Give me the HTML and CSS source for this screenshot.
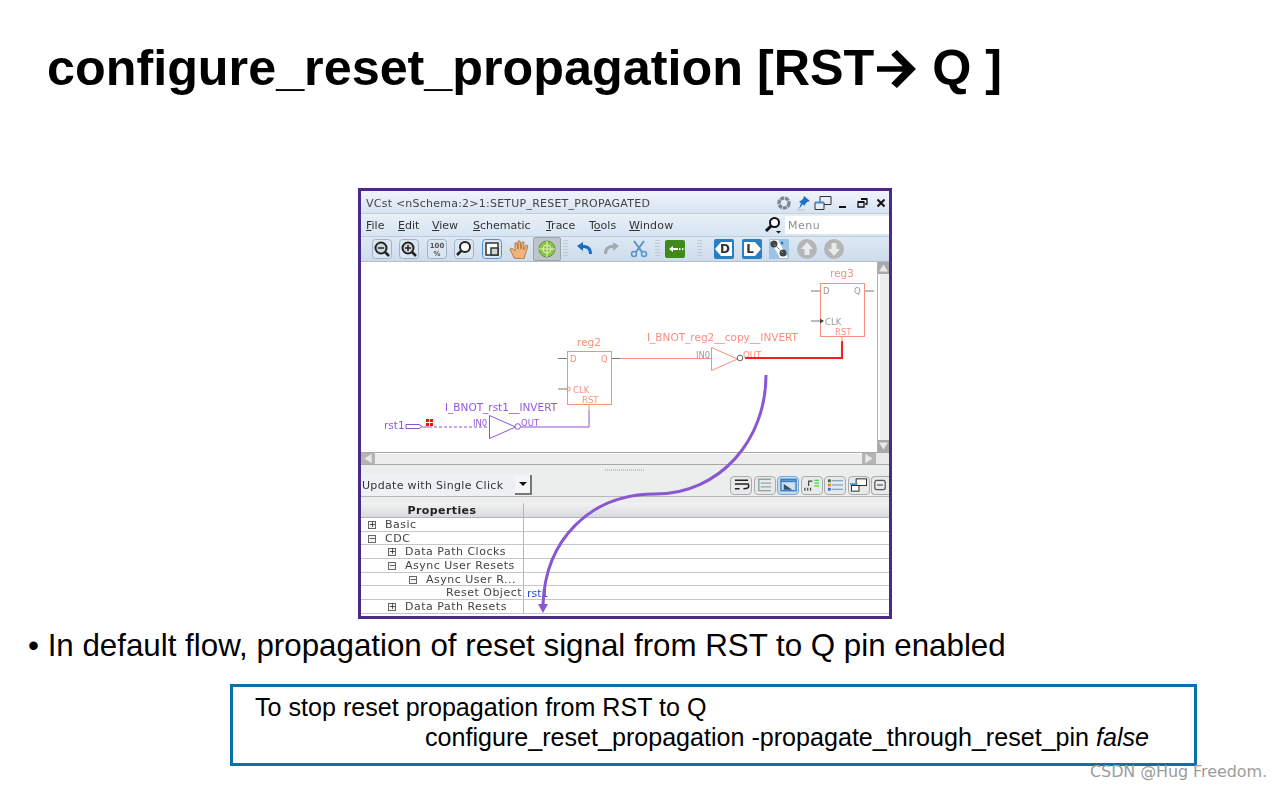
FILE: index.html
```html
<!DOCTYPE html>
<html lang="en">
<head>
<meta charset="utf-8">
<title>configure_reset_propagation</title>
<link rel="stylesheet" href="styles.css">
</head>
<body>
<main class="slide">
  <h1 class="title">configure_reset_propagation [RST<svg class="title-arrow" viewBox="0 0 44 40"><path d="M2 17h27L17 5l6-5 20 20-20 20-6-5 12-12H2z"/></svg> Q ]</h1>

  <section class="window">
    <div class="titlebar">
      <span class="titlebar-text">VCst &lt;nSchema:2&gt;1:SETUP_RESET_PROPAGATED</span>
      <div class="titlebar-icons">
        <svg class="ti" viewBox="0 0 16 16"><circle cx="8" cy="8" r="5" fill="none" stroke="#7f8794" stroke-width="3.4" stroke-dasharray="4 .8"/></svg>
        <svg class="ti" viewBox="0 0 16 16"><path d="M9 1l6 5-3 1-3 4-1-2-4 5 2-6-2-1 4-3z" fill="#1f6fc4"/><path d="M2 15h8" stroke="#b9c2cc"/></svg>
        <svg class="ti ti-wide" viewBox="0 0 18 16"><path d="M6 1.500h11v8H6z" fill="#e5edf6" stroke="#333"/><path d="M1 7.500h9v7H1z" fill="#e5edf6" stroke="#333"/><path d="M1 7.500h9" stroke="#3c8fd6" stroke-width="2"/></svg>
        <svg class="ti" viewBox="0 0 16 16"><path d="M4 12h7" stroke="#111" stroke-width="2"/></svg>
        <svg class="ti" viewBox="0 0 16 16"><path d="M7 4h6v5h-2M4 7h6v5H4z" fill="none" stroke="#111" stroke-width="1.300"/><path d="M7 4h6M4 7h6" stroke="#111" stroke-width="2.200"/></svg>
        <svg class="ti" viewBox="0 0 16 16"><path d="M4.500 4.500l7 7M11.500 4.500l-7 7" stroke="#111" stroke-width="2"/></svg>
      </div>
    </div>

    <nav class="menubar">
      <span class="menu menu-file"><u>F</u>ile</span>
      <span class="menu menu-edit"><u>E</u>dit</span>
      <span class="menu menu-view"><u>V</u>iew</span>
      <span class="menu menu-schem"><u>S</u>chematic</span>
      <span class="menu menu-trace"><u>T</u>race</span>
      <span class="menu menu-tools">T<u>o</u>ols</span>
      <span class="menu menu-window"><u>W</u>indow</span>
      <svg class="search-icon" viewBox="0 0 18 18"><circle cx="10.500" cy="6.500" r="4.500" fill="#fff" stroke="#111" stroke-width="2"/><path d="M7 10l-5 5" stroke="#111" stroke-width="3"/><path d="M12 15h5l-2.500 2.500z" fill="#111"/></svg>
      <span class="search-box">Menu</span>
    </nav>

    <div class="toolbar">
      <span class="tool"><svg viewBox="0 0 20 20"><rect x=".5" y=".5" width="19" height="19" rx="3" fill="#dbe6f2" stroke="#9fb2c7"/><circle cx="9" cy="9" r="5.500" fill="#cfd6dc" stroke="#222" stroke-width="2"/><path d="M6 9h6" stroke="#222" stroke-width="1.500"/><path d="M13 13l4 4" stroke="#222" stroke-width="2.500"/></svg></span>
      <span class="tool"><svg viewBox="0 0 20 20"><rect x=".5" y=".5" width="19" height="19" rx="3" fill="#dbe6f2" stroke="#9fb2c7"/><circle cx="9" cy="9" r="5.500" fill="#cfd6dc" stroke="#222" stroke-width="2"/><path d="M6 9h6M9 6v6" stroke="#222" stroke-width="1.500"/><path d="M13 13l4 4" stroke="#222" stroke-width="2.500"/></svg></span>
      <span class="tool"><svg viewBox="0 0 20 20"><rect x=".5" y=".5" width="19" height="19" rx="3" fill="#dbe6f2" stroke="#9fb2c7"/><text x="10" y="9" class="tool-text">100</text><text x="10" y="17" class="tool-text">%</text></svg></span>
      <span class="tool"><svg viewBox="0 0 20 20"><rect x=".5" y=".5" width="19" height="19" rx="3" fill="#dbe6f2" stroke="#9fb2c7"/><circle cx="11" cy="8" r="5" fill="#fff" stroke="#222" stroke-width="2"/><path d="M7 12l-4 4" stroke="#222" stroke-width="2.500"/></svg></span>
      <span class="tool"><svg viewBox="0 0 20 20"><rect x=".5" y=".5" width="19" height="19" rx="3" fill="#dbe6f2" stroke="#4d93d2"/><rect x="4" y="4" width="12" height="12" fill="#fff" stroke="#333" stroke-width="1.500"/><rect x="9" y="9" width="7" height="7" fill="#cfd6dc" stroke="#333" stroke-width="1.500"/></svg></span>
      <span class="tool"><svg viewBox="0 0 20 20"><path d="M5 19L1 10l2-1 3 3 0-8 2 0 1 6 0-8h2l1 8 1-7h2l-.5 8 2.500-5 2 1-3 9-1 4z" fill="#eeb57c" stroke="#a86a33" stroke-width=".8"/></svg></span>
      <span class="tool tool-active"><svg viewBox="0 0 20 20"><circle cx="10" cy="10" r="8" fill="#8cc63f" stroke="#6d8f4a"/><circle cx="10" cy="10" r="4" fill="none" stroke="#e4f3c8"/><path d="M10 2v16M2 10h16" stroke="#e4f3c8"/></svg></span>
      <span class="sep"></span>
      <span class="tool"><svg viewBox="0 0 20 20"><path d="M3 7l6-4v3c5 0 9 2 9 9l-3 0c0-4-2-6-6-6v3z" fill="#1a6cc0"/></svg></span>
      <span class="tool"><svg viewBox="0 0 20 20"><path d="M17 7l-6-4v3c-5 0-9 2-9 9l3 0c0-4 2-6 6-6v3z" fill="#a4a9ae"/></svg></span>
      <span class="tool"><svg viewBox="0 0 20 20"><path d="M5 2l8 11M15 2L7 13" stroke="#5a93cf" stroke-width="2"/><circle cx="5" cy="15" r="2.500" fill="none" stroke="#5a93cf" stroke-width="1.500"/><circle cx="15" cy="15" r="2.500" fill="none" stroke="#5a93cf" stroke-width="1.500"/></svg></span>
      <span class="sep sep-2"></span>
      <span class="tool"><svg viewBox="0 0 20 20"><rect y="1" width="20" height="18" rx="2" fill="#3f8a1a"/><path d="M4 10l4-3v2h5v2H8v2zM14 9h1.500v2H14zM17 9h1.500v2H17z" fill="#fff"/></svg></span>
      <span class="sep sep-3"></span>
      <span class="tool"><svg viewBox="0 0 20 20"><rect width="20" height="20" rx="2" fill="#2a7fc0"/><path d="M1 10l6-7h11v14H7z" fill="#fff"/><text x="11" y="14" class="tool-letter">D</text></svg></span>
      <span class="tool"><svg viewBox="0 0 20 20"><rect width="20" height="20" rx="2" fill="#2a7fc0"/><path d="M2 3h11l6 7-6 7H2z" fill="#fff"/><text x="8" y="14" class="tool-letter">L</text></svg></span>
      <span class="tool"><svg viewBox="0 0 20 20"><rect width="20" height="20" rx="1" fill="#9cc4e6"/><path d="M1 1h8L19 19h-8z" fill="#fff"/><circle cx="5" cy="5" r="3.500" fill="#444"/><circle cx="14" cy="14" r="3.500" fill="#444"/><circle cx="13" cy="4" r="1.500" fill="#2a7fc0"/><path d="M5 5l9 9" stroke="#888"/></svg></span>
      <span class="tool"><svg viewBox="0 0 20 20"><circle cx="10" cy="10" r="10" fill="#b3b5b7"/><path d="M10 3l6 7h-3.500v6h-5v-6H4z" fill="#e9eaeb"/></svg></span>
      <span class="tool"><svg viewBox="0 0 20 20"><circle cx="10" cy="10" r="10" fill="#b3b5b7"/><path d="M10 17l6-7h-3.500V4h-5v6H4z" fill="#e9eaeb"/></svg></span>
    </div>

    <div class="canvas-row">
      <svg class="schematic" viewBox="361 262 516 190">
        <g class="sym-reg">
          <text x="589" y="346" class="lbl lbl-m" text-anchor="middle">reg2</text>
          <rect x="567.500" y="351.500" width="44" height="53"/>
          <text x="570" y="362" class="pin">D</text>
          <text x="601" y="362" class="pin">Q</text>
          <text x="573" y="393" class="pin">CLK</text>
          <text x="582" y="403" class="pin">RST</text>
        </g>
        <path d="M558 358.500h9M612 358.500h8M558 389h9" class="stub"/>
        <path d="M620 358.500h91" class="wire-salmon"/>
        <circle cx="568.500" cy="389" r="1.800" class="pin-dot"/>

        <g class="sym-reg">
          <text x="842" y="277" class="lbl lbl-m" text-anchor="middle">reg3</text>
          <rect x="820.500" y="283.500" width="44" height="53"/>
          <text x="823" y="294" class="pin pin-gray">D</text>
          <text x="854" y="294" class="pin pin-gray">Q</text>
          <text x="825" y="325" class="pin pin-gray">CLK</text>
          <text x="835" y="335" class="pin">RST</text>
        </g>
        <path d="M811 291h9M865 291h9M811 321h12" class="stub"/>
        <path d="M820 318.500l4 2.500-4 2.500z" fill="#444"/>

        <text x="647" y="341" class="lbl">I_BNOT_reg2__copy__INVERT</text>
        <text x="696" y="358" class="pin pin-gray">IN0</text>
        <text x="743" y="358" class="pin">OUT</text>
        <path d="M711.500 347.500v23l26-11.500z" class="tri-salmon"/>
        <circle cx="740" cy="358" r="2.800" class="bubble-gray"/>
        <path d="M745 358h97v-17" class="wire-red"/>
        <path d="M842 336v6" class="wire-salmon"/>

        <text x="445" y="411" class="lbl lbl-p">I_BNOT_rst1__INVERT</text>
        <text x="384" y="429" class="lbl lbl-p">rst1</text>
        <path d="M406 424.500h13l3.500 2-3.500 2h-13z" class="port"/>
        <path d="M423 427h6" class="wire-purple"/>
        <path d="M429 427h60" class="wire-dash"/>
        <g class="dots"><rect x="426" y="419" width="3" height="3"/><rect x="430" y="419" width="3" height="3"/><rect x="426" y="423" width="3" height="3"/><rect x="430" y="423" width="3" height="3"/></g>
        <text x="473" y="426" class="pin pin-p">IN0</text>
        <text x="521" y="425.500" class="pin pin-p">OUT</text>
        <path d="M489.500 415.500v23l26-11.500z" class="tri-purple"/>
        <circle cx="517.700" cy="426.500" r="2.800" class="bubble-purple"/>
        <path d="M521 427h68v-17" class="wire-purple"/>
        <path d="M589 404v6" class="wire-salmon"/>
      </svg>
      <div class="vscroll">
        <span class="sb-btn"><svg viewBox="0 0 10 10"><path d="M5 1l5 8H0z" fill="#e9e9e9"/></svg></span>
        <span class="sb-track"></span>
        <span class="sb-btn"><svg viewBox="0 0 10 10"><path d="M5 9l5-8H0z" fill="#e9e9e9"/></svg></span>
      </div>
    </div>

    <div class="hscroll">
      <span class="hs-btn"><svg viewBox="0 0 10 10"><path d="M1 5l8-5v10z" fill="#e9e9e9"/></svg></span>
      <span class="hs-track"></span>
      <span class="hs-btn"><svg viewBox="0 0 10 10"><path d="M9 5L1 0v10z" fill="#e9e9e9"/></svg></span>
    </div>

    <div class="splitter"><span class="splitter-grip"></span></div>

    <div class="update-row">
      <div class="dropdown">
        <span class="dropdown-text">Update with Single Click</span>
        <span class="dropdown-btn"><svg viewBox="0 0 10 6"><path d="M1 1h8L5 5z" fill="#111"/></svg></span>
      </div>
      <div class="side-tools">
        <span class="stool"><svg viewBox="0 0 18 14"><path d="M2 2h14M2 6h14c2 4-1 5-5 5M2 11h5" fill="none" stroke="#222" stroke-width="1.600"/></svg></span>
        <span class="stool"><svg viewBox="0 0 18 14"><path d="M2 1h14M5 5h11M5 9h11M2 13h14M3 1v12" fill="none" stroke="#8fa6a0" stroke-width="1.500"/></svg></span>
        <span class="stool stool-on"><svg viewBox="0 0 18 14"><rect x="1" y="1" width="16" height="12" fill="#cfe0f3" stroke="#3d7fc4" stroke-width="1.500"/><path d="M1 3h16" stroke="#3d7fc4" stroke-width="2"/><path d="M4 6l9 6H4z" fill="#36506b"/></svg></span>
        <span class="stool"><svg viewBox="0 0 18 14"><path d="M6 8V3h4M2 13V10M5 13V10M8 13V10" fill="none" stroke="#444" stroke-width="1.300"/><path d="M12 2h5M12 5h5M12 8h5" stroke="#45d24a" stroke-width="1.300"/></svg></span>
        <span class="stool"><svg viewBox="0 0 18 14"><rect x="1" y="1" width="3" height="3" fill="#2f7a33"/><rect x="1" y="5.500" width="3" height="3" fill="#d98a22"/><rect x="1" y="10" width="3" height="3" fill="#2d76c0"/><path d="M5 2.500h12M5 7h12M5 11.500h12" stroke="#5a8fb8"/></svg></span>
        <span class="stool"><svg viewBox="0 0 18 14"><rect x="6.500" y=".5" width="11" height="7" fill="#fff" stroke="#222"/><rect x="1.500" y="7.500" width="8" height="6" fill="#fff" stroke="#222"/><path d="M0 6h8" stroke="#4c9be0" stroke-width="2"/></svg></span>
        <span class="stool stool-last"><svg viewBox="0 0 18 14"><rect x="3" y="2" width="11" height="10" rx="2" fill="none" stroke="#555" stroke-width="1.300"/><path d="M5.500 7h6" stroke="#555" stroke-width="1.300"/></svg></span>
      </div>
    </div>

    <div class="props">
      <div class="props-head"><span class="props-name">Properties</span><span class="props-val"></span></div>
      <div class="prop"><span class="prop-name lvl-0"><i class="exp">+</i>Basic</span><span class="prop-val"></span></div>
      <div class="prop"><span class="prop-name lvl-0"><i class="exp">−</i>CDC</span><span class="prop-val"></span></div>
      <div class="prop"><span class="prop-name lvl-1"><i class="exp">+</i>Data Path Clocks</span><span class="prop-val"></span></div>
      <div class="prop"><span class="prop-name lvl-1"><i class="exp">−</i>Async User Resets</span><span class="prop-val"></span></div>
      <div class="prop"><span class="prop-name lvl-2"><i class="exp">−</i>Async User R...</span><span class="prop-val"></span></div>
      <div class="prop"><span class="prop-name lvl-3">Reset Object</span><span class="prop-val prop-link">rst1</span></div>
      <div class="prop"><span class="prop-name lvl-1"><i class="exp">+</i>Data Path Resets</span><span class="prop-val"></span></div>
    </div>

    <svg class="callout" viewBox="0 0 528 425">
      <path d="M405 184C405 249 359 303 294 303C229 303 184 349 182 414" class="callout-line"/>
      <path d="M177 413h10l-5 9z" class="callout-head"/>
    </svg>
  </section>

  <p class="bullet">• In default flow, propagation of reset signal from RST to Q pin enabled</p>

  <div class="note">
    <p class="note-line">To stop reset propagation from RST to Q</p>
    <p class="note-line note-cmd">configure_reset_propagation -propagate_through_reset_pin <em>false</em></p>
  </div>

  <span class="watermark">CSDN @Hug Freedom.</span>
</main>
</body>
</html>
```

FILE: styles.css
```css
* { box-sizing: border-box; }
html, body { margin: 0; padding: 0; background: #fff; }
body { font-family: "Liberation Sans", Arial, sans-serif; color: #000; overflow: hidden; }
.slide { position: relative; width: 1280px; height: 790px; overflow: hidden; padding-top: 40px; }

.title { margin: 0 0 0 47px; height: 148px; font-size: 50.300px; line-height: 56px; font-weight: 700; white-space: nowrap; }
.title-arrow { width: 44px; height: 38px; vertical-align: -3px; margin-left: 0; }

.window {
  position: relative; width: 534px; height: 431px; margin-left: 358px;
  border: 3px solid #4b2a8a; background: #eceded;
  display: flex; flex-direction: column;
  font-family: "DejaVu Sans", sans-serif; color: #333;
}
.window > *:not(.callout) { filter: blur(.6px); }

.titlebar { height: 23px; flex: none; display: flex; align-items: center; justify-content: space-between; padding: 2px 0 0 5px;
  background: linear-gradient(#f1f5fa, #d5e3f1); font-size: 11px; color: #444; border-bottom: 1px solid #c5ced8; }
.titlebar-text { letter-spacing: .23px; }
.titlebar-icons { display: flex; align-items: center; gap: 3px; }
.ti { width: 16px; height: 16px; display: block; }
.ti-wide { width: 18px; }

.menubar { height: 23px; flex: none; display: flex; align-items: center; padding-left: 5px;
  background: linear-gradient(#e8eff7, #d7e5f3); font-size: 11px; color: #333; border-bottom: 1px solid #bfcbd7; }
.menu-file { width: 32px; }
.menu-edit { width: 34px; }
.menu-view { width: 41px; }
.menu-schem { width: 73px; }
.menu-trace { width: 43px; }
.menu-tools { width: 40px; }
.menu-window { width: 135px; letter-spacing: .15px; }
.search-icon { width: 18px; height: 18px; flex: none; }
.search-box { flex: 1; margin-left: 3px; height: 18px; background: #fff; color: #8a8f95; font-size: 11px; line-height: 20px; padding-left: 3px; letter-spacing: .5px; }

.toolbar { height: 25px; flex: none; display: flex; align-items: center; padding-left: 7px;
  background: linear-gradient(#dde8f3, #cddcec); border-bottom: 1px solid #b4bfca; }
.tool { width: 27.500px; height: 24px; flex: none; display: flex; align-items: center; justify-content: center; }
.tool svg { width: 20px; height: 20px; display: block; }
.tool-active { background: #bcc5ca; border: 1px solid #9aa3a9; border-radius: 2px; }
.sep { width: 10px; height: 18px; flex: none; background: repeating-linear-gradient(#c3c9cf 0 1px, transparent 1px 3px); background-size: 5px 100%; background-repeat: no-repeat; background-position: center; }
.sep-2 { width: 8px; }
.sep-3 { width: 22px; }
.tool-text { font-size: 7px; font-weight: 700; text-anchor: middle; fill: #555; font-family: "DejaVu Sans", sans-serif; }
.tool-letter { font-size: 12px; font-weight: 700; text-anchor: middle; fill: #333; font-family: "DejaVu Sans", sans-serif; }

.canvas-row { height: 190px; flex: none; display: flex; background: #fff; }
.schematic { width: 516px; height: 190px; display: block; flex: none; background: #fff; font-family: "DejaVu Sans", sans-serif; }
.vscroll { width: 12px; flex: none; display: flex; flex-direction: column; background: #e5e5e5; border-left: 1px solid #b0b0b0; }
.sb-btn { height: 12px; flex: none; background: #a9a9a9; display: block; padding: 1px; }
.sb-btn svg { width: 100%; height: 100%; display: block; }
.sb-track { flex: 1; background: #ededed; border-left: 2px solid #fff; }

.lbl { font-size: 10.500px; fill: #fa8e7e; }
.lbl-p { fill: #9258dc; }
.pin { font-size: 8.500px; fill: #fa8e7e; }
.pin-gray { fill: #9a9a9a; }
.pin-p { fill: #9258dc; }
.sym-reg rect { fill: #fff; stroke: #fa8e7e; stroke-width: 1; }
.stub { stroke: #777; stroke-width: 1; fill: none; }
.wire-salmon { stroke: #fa8e7e; stroke-width: 1; fill: none; }
.wire-red { stroke: #f31e1e; stroke-width: 2; fill: none; }
.wire-purple { stroke: #8c52d6; stroke-width: 1; fill: none; }
.wire-dash { stroke: #8c52d6; stroke-width: 1; fill: none; stroke-dasharray: 3 2; }
.tri-salmon { fill: #fff; stroke: #fa8e7e; }
.tri-purple { fill: #fff; stroke: #8c52d6; }
.bubble-gray { fill: #fff; stroke: #666; }
.bubble-purple { fill: #fff; stroke: #8c52d6; }
.pin-dot { fill: none; stroke: #fa8e7e; }
.port { fill: #fff; stroke: #8c52d6; }
.dots rect { fill: #ee1111; }

.hscroll { height: 13px; flex: none; display: flex; background: #e8e8e8; border-top: 1px solid #a8a8a8; border-bottom: 1px solid #a8a8a8; }
.hs-btn { width: 14px; flex: none; background: #b5b5b5; display: block; padding: 1px 2px; }
.hs-btn svg { width: 100%; height: 100%; display: block; }
.hs-track { flex: 1; background: #ededed; border-top: 1px solid #fff; }
.hs-btn:last-child { margin-right: 13px; }

.splitter { height: 9px; flex: none; display: flex; align-items: center; justify-content: center; }
.splitter-grip { width: 40px; height: 2px; background: repeating-linear-gradient(90deg, #c4c4c4 0 1px, transparent 1px 2px); }

.update-row { height: 23px; flex: none; display: flex; align-items: center; justify-content: space-between; border-bottom: 1px solid #b8b8b8; }
.dropdown { width: 171px; height: 22px; display: flex; align-items: center; justify-content: space-between; background: #edf1f6; }
.dropdown-text { font-size: 11px; color: #333; padding-left: 1px; letter-spacing: .32px; }
.dropdown-btn { width: 17px; height: 20px; background: #f5f5f5; border-right: 2px solid #777; border-bottom: 2px solid #777; display: flex; align-items: center; justify-content: center; }
.dropdown-btn svg { width: 10px; height: 6px; display: block; }
.side-tools { display: flex; gap: 1.500px; }
.stool { width: 22px; height: 19px; border: 1px solid #a9abac; border-radius: 4px; background: #e8e9ea; display: flex; align-items: center; justify-content: center; }
.stool svg { width: 17px; height: 14px; display: block; }
.stool-on { background: #c7dbf0; border-color: #7da8d4; }
.stool-last { width: 18px; border-right: 0; border-radius: 4px 0 0 4px; }

.props { flex: 1; display: flex; flex-direction: column; background: #fff; margin-top: 6px; font-size: 11px; }
.props-head { height: 15px; flex: none; display: flex; background: linear-gradient(#f2f2f2, #d8dadd); border-bottom: 1px solid #aeb4bf; }
.props-name { width: 163px; flex: none; text-align: center; font-weight: 700; font-size: 11px; line-height: 15px; color: #222; letter-spacing: .4px; border-right: 1px solid #b5b5b5; }
.props-val { flex: 1; }
.prop { height: 13.700px; flex: none; display: flex; border-bottom: 1px solid #c6c6c6; line-height: 14px; white-space: nowrap; padding-top: 1px; }
.prop-name { width: 163px; flex: none; margin-top: -1px; padding-top: 1px; border-right: 1px solid #b5b5b5; display: flex; align-items: center; color: #444; letter-spacing: .5px; }
.lvl-0 { padding-left: 7px; }
.lvl-1 { padding-left: 27px; }
.lvl-2 { padding-left: 48px; }
.lvl-3 { padding-left: 85px; }
.exp { width: 8px; height: 8px; flex: none; margin-right: 9px; border: 1px solid #666; background: #f4f4f4; font-style: normal; font-size: 8px; line-height: 6px; text-align: center; color: #111; letter-spacing: 0; }
.prop-val { flex: 1; padding-left: 3px; }
.prop-link { color: #2a4fe8; }

.callout { position: absolute; left: 0; top: 0; width: 528px; height: 425px; pointer-events: none; }
.callout-line { fill: none; stroke: #8a57d2; stroke-width: 3; }
.callout-head { fill: #8a57d2; }

.bullet { margin: 8px 0 0 28px; height: 40px; font-size: 31.300px; line-height: 38px; white-space: nowrap; }

.note { width: 967px; height: 82px; margin: 17px 0 0 230px; border: 3px solid #0a71aa; padding: 5px 0 0 22px; font-size: 25.100px; line-height: 30px; }
.note-line { margin: 0; white-space: nowrap; }
.note-cmd { padding-left: 170px; }

.watermark { position: absolute; left: 1090px; top: 762px; font-family: "DejaVu Sans", sans-serif; font-size: 16px; line-height: 20px; color: #9c9c9c; white-space: nowrap; letter-spacing: -.1px; }
```
